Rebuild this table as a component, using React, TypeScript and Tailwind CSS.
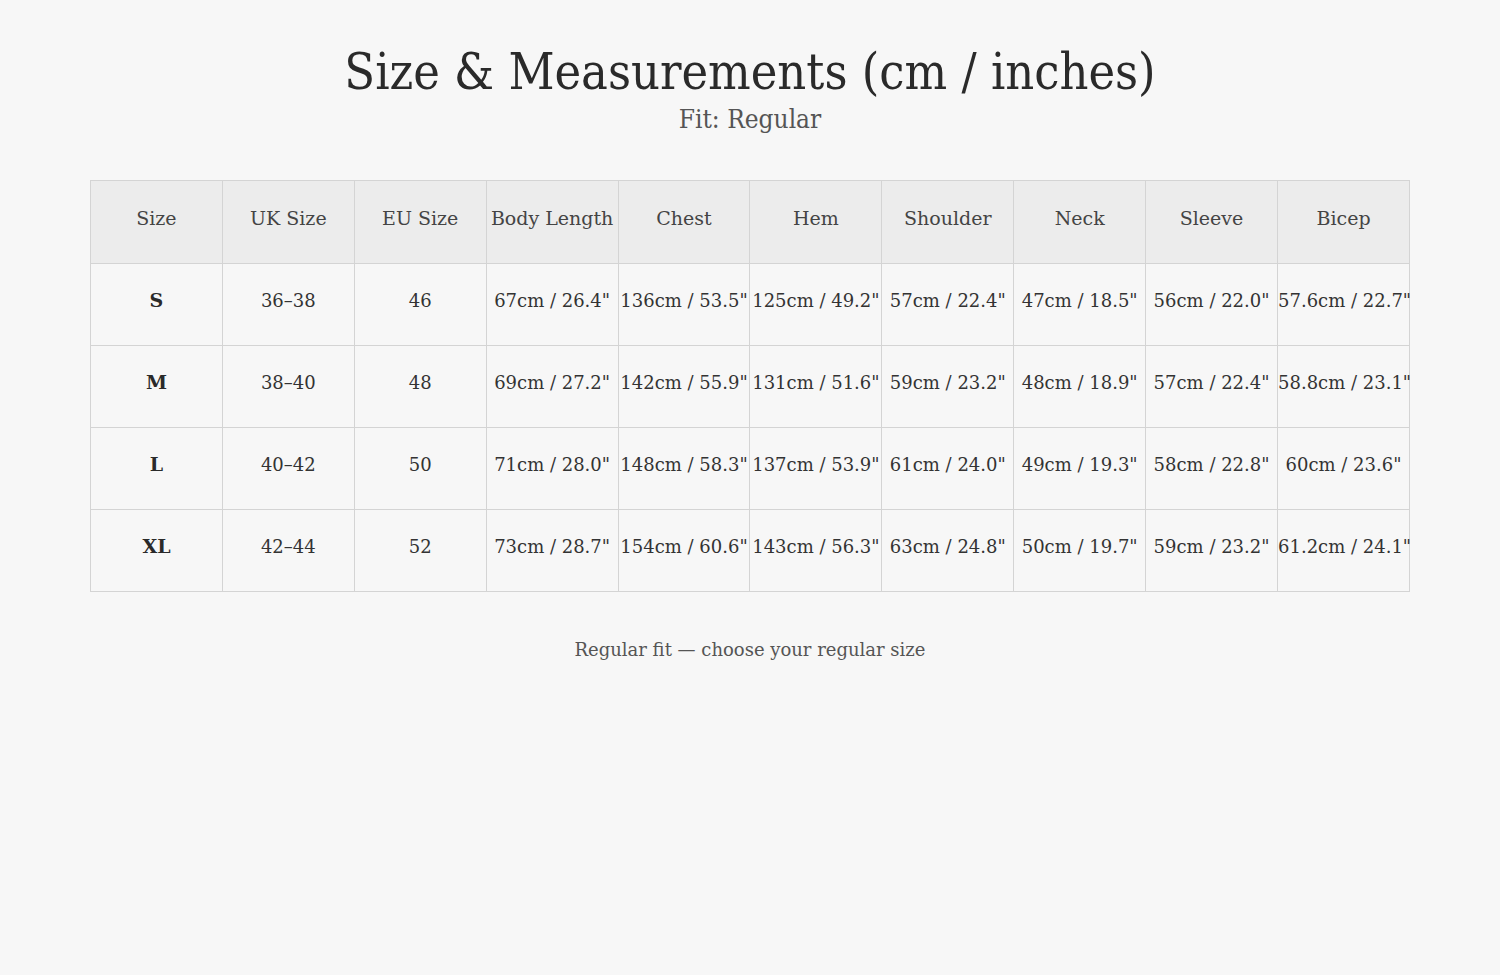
const headers = ["Size", "UK Size", "EU Size", "Body Length", "Chest", "Hem", "Shoulder", "Neck", "Sleeve", "Bicep"]

const rows = [
  ["S", "36–38", "46", "67cm / 26.4\"", "136cm / 53.5\"", "125cm / 49.2\"", "57cm / 22.4\"", "47cm / 18.5\"", "56cm / 22.0\"", "57.6cm / 22.7\""],
  ["M", "38–40", "48", "69cm / 27.2\"", "142cm / 55.9\"", "131cm / 51.6\"", "59cm / 23.2\"", "48cm / 18.9\"", "57cm / 22.4\"", "58.8cm / 23.1\""],
  ["L", "40–42", "50", "71cm / 28.0\"", "148cm / 58.3\"", "137cm / 53.9\"", "61cm / 24.0\"", "49cm / 19.3\"", "58cm / 22.8\"", "60cm / 23.6\""],
  ["XL", "42–44", "52", "73cm / 28.7\"", "154cm / 60.6\"", "143cm / 56.3\"", "63cm / 24.8\"", "50cm / 19.7\"", "59cm / 23.2\"", "61.2cm / 24.1\""],
]

export default function App() {
  return (
    <div className="min-h-screen bg-[#f7f7f7] text-[#2a2a2a] font-['DejaVu_Serif',serif]">
      <div className="px-[90px] pt-[43px]">
        <h1 className="text-center text-[50px] leading-[58px] [font-stretch:condensed]">Size &amp; Measurements (cm / inches)</h1>
        <p className="mt-[2px] text-center text-[26px] leading-[32px] text-[#555] [font-stretch:condensed]">Fit: Regular</p>

        <table className="mt-[45px] w-full table-fixed border-collapse">
          <thead>
            <tr className="h-[83px] bg-[#ececec]">
              {headers.map((h) => (
                <th key={h} className="border border-[#d4d4d4] px-0 pb-[8px] text-center text-[19px] font-normal text-[#444]">
                  {h}
                </th>
              ))}
            </tr>
          </thead>
          <tbody>
            {rows.map((r) => (
              <tr key={r[0]} className="h-[82px]">
                {r.map((c, i) => (
                  <td
                    key={i}
                    className={
                      "border border-[#d4d4d4] px-0 pb-[8px] text-center whitespace-nowrap " +
                      (i === 0 ? "font-bold text-[19px]" : "text-[18px] text-[#333]")
                    }
                  >
                    {c}
                  </td>
                ))}
              </tr>
            ))}
          </tbody>
        </table>

        <p className="mt-[44px] text-center text-[18px] text-[#555]">Regular fit — choose your regular size</p>
      </div>
    </div>
  )
}
